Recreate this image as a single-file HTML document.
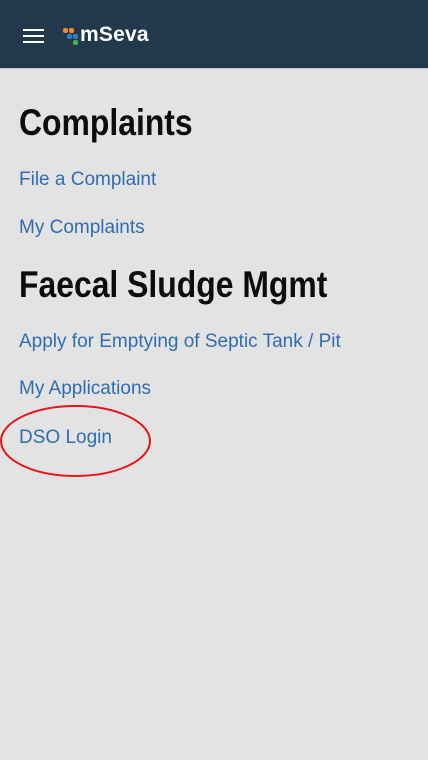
<!DOCTYPE html>
<html><head><style>
body{margin:0;width:428px;height:760px;background:#e3e3e3;font-family:"Liberation Sans",sans-serif;overflow:hidden;position:relative}
.hdr{position:absolute;left:0;top:0;width:428px;height:68px;background:#22384d;border-bottom:1px solid #c8c8c8}
.bar{position:absolute;left:23px;width:21px;height:2px;background:#fff}
.dot{position:absolute;width:5px;height:5px;border-radius:2px}
.logo{position:absolute;left:80px;top:23px;color:#fff;font-weight:bold;font-size:21px;letter-spacing:0.2px}
h1{position:absolute;left:19px;margin:0;font-size:37px;font-weight:bold;color:#0b0c0c;transform:scaleX(0.862);transform-origin:left;white-space:nowrap}
a{position:absolute;left:19px;font-size:19px;color:#2f6db3;text-decoration:none;white-space:nowrap}
</style></head><body>
<div class="hdr">
<div class="bar" style="top:29px"></div><div class="bar" style="top:35px"></div><div class="bar" style="top:41px"></div>
<div class="dot" style="left:63px;top:28px;background:#f08a24"></div>
<div class="dot" style="left:69px;top:28px;background:#f08a24"></div>
<div class="dot" style="left:67px;top:34px;background:#2a83c8"></div>
<div class="dot" style="left:73px;top:34px;background:#2a83c8"></div>
<div class="dot" style="left:73px;top:40px;background:#3cb44a"></div>
<div class="logo">mSeva</div>
</div>
<h1 style="top:102px">Complaints</h1>
<a style="top:169px">File a Complaint</a>
<a style="top:217px">My Complaints</a>
<h1 style="top:264px">Faecal Sludge Mgmt</h1>
<a style="top:331px">Apply for Emptying of Septic Tank / Pit</a>
<a style="top:378px">My Applications</a>
<a style="top:427px">DSO Login</a>
<svg style="position:absolute;left:0;top:404px" width="154" height="76"><ellipse cx="75.5" cy="37" rx="74.5" ry="35" fill="none" stroke="#e8141b" stroke-width="2"/></svg>
</body></html>
